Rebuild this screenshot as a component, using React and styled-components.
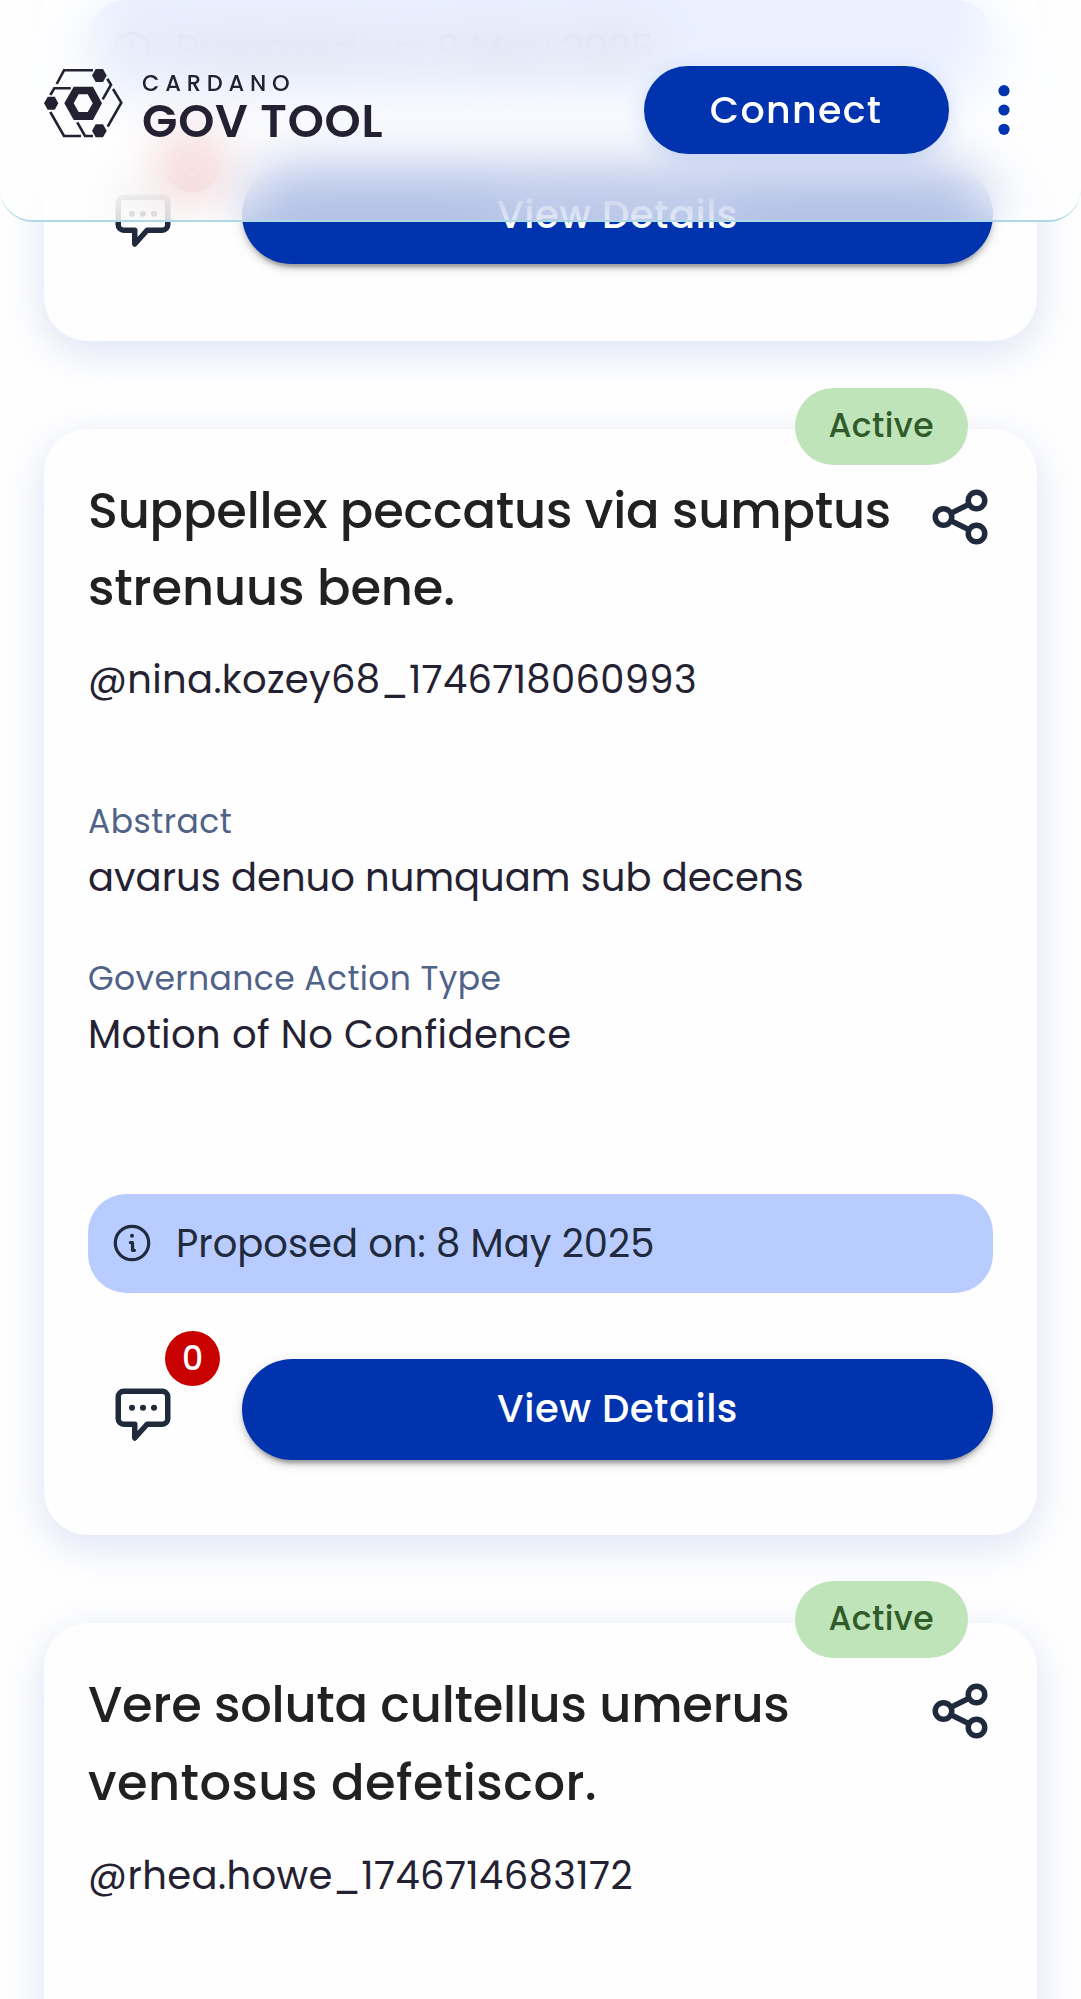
import React from "react";
import styled, { createGlobalStyle } from "styled-components";

const Global = createGlobalStyle`
  html, body { margin: 0; background: #fefefe; }
  body { height: 1999px; overflow: hidden; }
  * { box-sizing: border-box; }
`;

const ink = "#242232";
const slate = "#212a3d";

const Page = styled.div`
  position: relative;
  height: 1999px;
  overflow: hidden;
  font-family: Poppins, Inter, "Liberation Sans", sans-serif;
  font-feature-settings: "cv11";
  color: ${ink};
`;

const Header = styled.header`
  position: absolute;
  inset: 0 0 auto 0;
  z-index: 5;
  height: 222px;
  border-bottom: 2px solid #add8e6;
  border-radius: 0 0 33px 33px;
  overflow: hidden;
`;

const Frost = styled.div`
  position: absolute;
  inset: 0;
  backdrop-filter: blur(27px);
  mask-image: linear-gradient(to bottom, rgba(0, 0, 0, 0.9) 0, rgba(0, 0, 0, 0.95) 35px, #000 66px, #000 150px, rgba(0, 0, 0, 0.57) 205px);
`;

const Tint = styled.div`
  position: absolute;
  inset: 0;
  background: rgba(255, 255, 255, 0.7);
`;

const Bar = styled.div`
  position: relative;
  display: flex;
  align-items: center;
  height: 220px;
  padding: 0 71.5px 0 44px;
`;

const Logo = styled.div`
  display: flex;
  align-items: flex-start;
  gap: 19px;
  flex: 1;
  height: 84px;
`;

const LogoText = styled.div`
  display: flex;
  flex-direction: column;
  white-space: nowrap;
`;

const LogoTop = styled.span`
  font-size: 22.5px;
  line-height: 31px;
  font-weight: 500;
  letter-spacing: 5.8px;
`;

const LogoMain = styled.span`
  font-size: 46px;
  line-height: 44px;
  font-weight: 600;
  letter-spacing: 0.8px;
`;

const Connect = styled.button`
  width: 305px;
  height: 88px;
  border: 0;
  border-radius: 44px;
  background: #0033ad;
  color: #fff;
  font: 500 38px/88px Poppins, Inter, sans-serif;
  letter-spacing: 1.3px;
  padding: 0;
  box-shadow: 0 5px 22px rgba(47, 98, 220, 0.2);
`;

const Dots = styled.svg`
  display: block;
  width: 12px;
  height: 52px;
  margin-left: 49px;
`;

const List = styled.main`
  display: flex;
  flex-direction: column;
  gap: 88px;
  padding: 0 44px;
  margin-top: -50px;
`;

const Card = styled.article`
  position: relative;
  flex: none;
  height: ${(p) => p.$height}px;
  padding: 43px 44px 44px;
  border-radius: 44px;
  background: #fefefe;
  box-shadow: 0 11px 41px #dde3f5;
  display: flex;
  flex-direction: column;
`;

const Chip = styled.span`
  position: absolute;
  top: -41.5px;
  right: 69px;
  width: 173.5px;
  height: 77px;
  border-radius: 39px;
  background: #c0e4ba;
  color: #2f5c29;
  font-size: 33px;
  font-weight: 500;
  line-height: 76.5px;
  letter-spacing: 0.4px;
  text-align: center;
`;

const Head = styled.div`
  display: flex;
  justify-content: space-between;
  align-items: flex-start;
`;

const Title = styled.h2`
  margin: 0;
  font-size: 49.5px;
  line-height: ${(p) => p.$line}px;
  font-weight: 500;
  color: #212121;
  white-space: nowrap;
`;

const TitleLine = styled.span`
  display: block;
  letter-spacing: ${(p) => p.$track}px;
`;

const ShareIcon = styled.svg`
  width: 66px;
  height: 66px;
  margin-top: 12px;
  flex: none;
`;

const Text = styled.p`
  margin: ${(p) => p.$top || 0}px 0 0;
  font-size: 38.5px;
  line-height: 55px;
  letter-spacing: ${(p) => p.$track || 0}px;
  white-space: nowrap;
`;

const Label = styled.p`
  margin: ${(p) => p.$top || 0}px 0 0;
  font-size: 33px;
  line-height: 44px;
  letter-spacing: ${(p) => p.$track || 0}px;
  color: #506288;
`;

const Bottom = styled.div`
  margin-top: auto;
`;

const Proposed = styled.div`
  display: flex;
  align-items: center;
  gap: 24px;
  height: 99px;
  padding-left: 24px;
  border-radius: 38.5px;
  background: #b8ccff;
  color: ${slate};
  font-size: 38.5px;
`;

const Actions = styled.div`
  display: flex;
  justify-content: space-between;
  align-items: flex-start;
  height: 102px;
  margin-top: 66px;
  margin-bottom: 30px;
`;

const Comment = styled.div`
  position: relative;
  width: 66px;
  margin: 24px 0 0 22px;
`;

const BubbleIcon = styled.svg`
  display: block;
  width: 66px;
  height: 66px;
`;

const Count = styled.span`
  position: absolute;
  top: -52px;
  left: 55px;
  width: 55px;
  height: 55px;
  border-radius: 50%;
  background: #c80000;
  color: #fff;
  font-size: 33px;
  font-weight: 500;
  line-height: 55px;
  text-align: center;
`;

const Details = styled.button`
  display: flex;
  justify-content: center;
  align-items: flex-start;
  width: 751px;
  height: ${(p) => p.$height}px;
  padding: 0;
  border: 0;
  border-radius: 51px;
  background: #0033ad;
  color: #fff;
  font: 500 38.5px/99px Poppins, Inter, sans-serif;
  font-feature-settings: "cv11";
  letter-spacing: 0.5px;
  box-shadow: 0 8px 3px -5px rgba(0, 0, 0, 0.2), 0 5px 5px rgba(0, 0, 0, 0.14), 0 3px 14px rgba(0, 0, 0, 0.12);
`;

function LogoMark() {
  return (
    <svg width="79" height="72" viewBox="0 0 79 72" fill={ink}>
      <g fill="none" stroke={ink} strokeWidth="2.6">
        <path d="M12.700 16 20 2.300H49" />
        <path d="M6.300 27 10.300 20.300H26.700" />
        <path d="M63.300 10.700 67 16.700 58.700 31.300" />
        <path d="M69 21 77.300 34.700 63.700 58.700" />
        <path d="M6.300 44 20 68H37" />
        <path d="M33.300 54.300 41 68H49" />
      </g>
      <path d="M0 35.200 3.700 28.700H10.800L14.300 35.200 10.800 41.700H3.700Z" />
      <path d="M48 7.500 51.700 1H59L62.700 7.500 59 14H51.700Z" />
      <path d="M48 62.800 51.700 56.300H59L62.700 62.800 59 69.300H51.700Z" />
      <path fillRule="evenodd" d="M20.300 35.300 29.700 18.700H49L58 35.300 49 52H29.700ZM29.700 35.200 34.700 44H43.700L48.700 35.200 43.700 26.300H34.700Z" />
    </svg>
  );
}

function Share() {
  return (
    <ShareIcon viewBox="0 0 24 24" fill="none" stroke={slate} strokeWidth="2">
      <circle cx="18" cy="6" r="3" />
      <circle cx="6" cy="12" r="3" />
      <circle cx="18" cy="18" r="3" />
      <path d="M8.700 10.650 15.300 7.350M8.700 13.350 15.300 16.650" />
    </ShareIcon>
  );
}

function Info() {
  return (
    <svg width="40" height="40" viewBox="0 0 40 40" fill="none" stroke={slate} strokeWidth="3.2" strokeLinecap="round" strokeLinejoin="round">
      <circle cx="20" cy="20" r="16.700" />
      <circle cx="20" cy="12.800" r="2" fill={slate} stroke="none" />
      <path d="M18.300 19.500H20.500V27.300H22.500" />
    </svg>
  );
}

function Bubble() {
  return (
    <BubbleIcon viewBox="0 0 24 24" fill="none" stroke={slate} strokeWidth="2" strokeLinejoin="round">
      <path d="M9 15H5a2 2 0 0 1-2-2V5a2 2 0 0 1 2-2H19a2 2 0 0 1 2 2V13a2 2 0 0 1-2 2H13.500L9 20Z" />
      <g fill={slate} stroke="none">
        <circle cx="8" cy="9" r="1.100" />
        <circle cx="12" cy="9" r="1.100" />
        <circle cx="16" cy="9" r="1.100" />
      </g>
    </BubbleIcon>
  );
}

const cards = [
  { height: 391, date: "9 May 2025", button: 99 },
  {
    height: 1105.5,
    lines: [["Suppellex peccatus via sumptus", -0.21], ["strenuus bene.", -0.12]],
    lineHeight: 77,
    author: "@nina.kozey68_1746718060993",
    authorTrack: 0.33,
    abstract: "avarus denuo numquam sub decens",
    type: "Motion of No Confidence",
    date: "8 May 2025",
    button: 101.75,
  },
  {
    height: 1105.5,
    lines: [["Vere soluta cultellus umerus", -0.25], ["ventosus defetiscor.", 0.45]],
    lineHeight: 78,
    author: "@rhea.howe_1746714683172",
    authorTrack: 0.4,
  },
];

function ActionCard({ item }) {
  return (
    <Card $height={item.height}>
      {item.lines && (
        <>
          <Chip>Active</Chip>
          <Head>
            <Title $line={item.lineHeight}>
              {item.lines.map(([text, track]) => (
                <TitleLine key={text} $track={track}>{text}</TitleLine>
              ))}
            </Title>
            <Share />
          </Head>
          <Text $top={26} $track={item.authorTrack}>{item.author}</Text>
        </>
      )}
      {item.abstract && (
        <>
          <Label $top={93} $track={0.48}>Abstract</Label>
          <Text $top={6}>{item.abstract}</Text>
          <Label $top={52} $track={0.4}>Governance Action Type</Label>
          <Text $top={6} $track={0.44}>{item.type}</Text>
        </>
      )}
      {item.date && (
        <Bottom>
          <Proposed><Info />Proposed on: {item.date}</Proposed>
          <Actions>
            <Comment><Bubble /><Count>0</Count></Comment>
            <Details $height={item.button}>View Details</Details>
          </Actions>
        </Bottom>
      )}
    </Card>
  );
}

export default function App() {
  return (
    <Page>
      <Global />
      <Header>
        <Frost />
        <Tint />
        <Bar>
          <Logo>
            <LogoMark />
            <LogoText>
              <LogoTop>CARDANO</LogoTop>
              <LogoMain>GOV TOOL</LogoMain>
            </LogoText>
          </Logo>
          <Connect>Connect</Connect>
          <Dots viewBox="0 0 12 52" fill="#0033ad">
            <circle cx="6" cy="6.700" r="5.600" />
            <circle cx="6" cy="26" r="5.600" />
            <circle cx="6" cy="45.300" r="5.600" />
          </Dots>
        </Bar>
      </Header>
      <List>
        {cards.map((item, i) => <ActionCard key={i} item={item} />)}
      </List>
    </Page>
  );
}
